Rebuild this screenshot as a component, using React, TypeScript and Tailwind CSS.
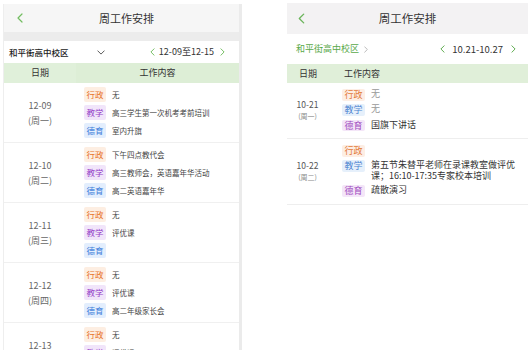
import React from "react"

type Item = { tag: "行政" | "教学" | "德育"; text: string; muted?: boolean }
type Day = { date: string; week: string; items: Item[] }

const leftDays: Day[] = [
  {
    date: "12-09",
    week: "(周一)",
    items: [
      { tag: "行政", text: "无" },
      { tag: "教学", text: "高三学生第一次机考考前培训" },
      { tag: "德育", text: "室内升旗" },
    ],
  },
  {
    date: "12-10",
    week: "(周二)",
    items: [
      { tag: "行政", text: "下午四点教代会" },
      { tag: "教学", text: "高三教师会，英语嘉年华活动" },
      { tag: "德育", text: "高二英语嘉年华" },
    ],
  },
  {
    date: "12-11",
    week: "(周三)",
    items: [
      { tag: "行政", text: "无" },
      { tag: "教学", text: "评优课" },
      { tag: "德育", text: "" },
    ],
  },
  {
    date: "12-12",
    week: "(周四)",
    items: [
      { tag: "行政", text: "无" },
      { tag: "教学", text: "评优课" },
      { tag: "德育", text: "高二年级家长会" },
    ],
  },
  {
    date: "12-13",
    week: "(周五)",
    items: [
      { tag: "行政", text: "无" },
      { tag: "教学", text: "评优课" },
      { tag: "德育", text: "" },
    ],
  },
]

const rightDays: Day[] = [
  {
    date: "10-21",
    week: "(周一)",
    items: [
      { tag: "行政", text: "无", muted: true },
      { tag: "教学", text: "无", muted: true },
      { tag: "德育", text: "国旗下讲话" },
    ],
  },
  {
    date: "10-22",
    week: "(周二)",
    items: [
      { tag: "行政", text: "" },
      { tag: "教学", text: "第五节朱替平老师在录课教室做评优课；16:10-17:35专家校本培训" },
      { tag: "德育", text: "疏散演习" },
    ],
  },
]

const leftTag: Record<string, string> = {
  行政: "bg-[#fdeee2] text-[#e8742a]",
  教学: "bg-[#f1e5fa] text-[#9440c8]",
  德育: "bg-[#e3eefd] text-[#3d7edb]",
}

const rightTag: Record<string, string> = {
  行政: "bg-[#fdeee4] text-[#e27a3b]",
  教学: "bg-[#e6f0fb] text-[#4a82d0]",
  德育: "bg-[#f4e6f8] text-[#a04dc0]",
}

function Chevron({ dir, className }: { dir: "left" | "right" | "down"; className?: string }) {
  const pts =
    dir === "left" ? "5,1 1,5 5,9" : dir === "right" ? "1,1 5,5 1,9" : "1,1 5,5 9,1"
  const vb = dir === "down" ? "0 0 10 6" : "0 0 6 10"
  return (
    <svg viewBox={vb} className={className} fill="none" stroke="currentColor" strokeWidth={1.2}>
      <polyline points={pts} strokeLinecap="round" strokeLinejoin="round" />
    </svg>
  )
}

function LeftPanel() {
  return (
    <div className="mt-[4px] ml-[3px] w-[239px] shrink-0 border-l border-[#eeeeee] border-r-[3px] border-r-[#ebebeb] bg-white">
      <div className="h-[28px] bg-[#f6f6f6] flex items-center">
        <div className="w-[30px] pl-[13px]">
          <Chevron dir="left" className="w-[6px] h-[10px] text-[#72bd60]" />
        </div>
        <div className="flex-1 text-center text-[11px] text-[#333]">周工作安排</div>
        <div className="w-[20px]" />
      </div>
      <div className="h-[9px] bg-[#ececec]" />
      <div className="h-[22px] flex items-center pl-[5px] text-[#222]">
        <span className="text-[8.5px] font-medium">和平街高中校区</span>
        <Chevron dir="down" className="ml-[28px] w-[8px] h-[5px] text-[#555]" />
        <div className="ml-auto mr-[14px] flex items-center">
          <Chevron dir="left" className="w-[5px] h-[8px] text-[#72bd60]" />
          <span className="ml-[4px] mr-[6px] text-[9px] text-[#333]">12-09至12-15</span>
          <Chevron dir="right" className="w-[5px] h-[8px] text-[#72bd60]" />
        </div>
      </div>
      <div className="h-[20px] flex text-[9px] text-[#333] bg-[#ddeed6]">
        <div className="w-[72px] flex items-center justify-center bg-[#e0f0da]">日期</div>
        <div className="flex-1 flex items-center justify-center">工作内容</div>
      </div>
      {leftDays.map((d) => (
        <div key={d.date} className="flex border-b-[1.5px] border-[#f0f0f0] py-[4px]">
          <div className="w-[72px] flex flex-col items-center justify-center text-[9px] leading-[15px] text-[#666]">
            <span>{d.date}</span>
            <span>{d.week}</span>
          </div>
          <div className="flex-1 pl-[8px] flex flex-col gap-[3px]">
            {d.items.map((it) => (
              <div key={it.tag} className="flex items-center h-[15px]">
                <span
                  className={`h-[15px] w-[22px] rounded-[2px] flex items-center justify-center text-[8.5px] ${leftTag[it.tag]}`}
                >
                  {it.tag}
                </span>
                <span className="ml-[6px] text-[7.5px] text-[#444]">{it.text}</span>
              </div>
            ))}
          </div>
        </div>
      ))}
    </div>
  )
}

function RightPanel() {
  return (
    <div className="mt-[3px] ml-[45px] flex-1 bg-white">
      <div className="h-[31px] bg-[#f3f2f3] flex items-center">
        <div className="w-[18px] pl-[11px]">
          <Chevron dir="left" className="w-[7px] h-[11px] text-[#6ab45a]" />
        </div>
        <div className="flex-1 text-center text-[11.5px] text-[#333] pr-[18px]">周工作安排</div>
      </div>
      <div className="h-[30px] flex items-center pl-[9px]">
        <span className="text-[9px] text-[#5aa94a]">和平街高中校区</span>
        <Chevron dir="right" className="ml-[5px] w-[4px] h-[7px] text-[#aaa]" />
        <div className="ml-auto mr-[12px] flex items-center">
          <Chevron dir="left" className="w-[5px] h-[8px] text-[#5aa94a]" />
          <span className="ml-[7px] mr-[8px] text-[9.5px] text-[#333]">10.21-10.27</span>
          <Chevron dir="right" className="w-[5px] h-[8px] text-[#5aa94a]" />
        </div>
      </div>
      <div className="h-[19px] flex items-center bg-[#e0efd9] text-[9px] text-[#333]">
        <span className="ml-[12px]">日期</span>
        <span className="ml-[27px]">工作内容</span>
      </div>
      {rightDays.map((d) => (
        <div key={d.date} className="flex border-b border-[#eeeeee] pt-[6px] pb-[7px]">
          <div className="w-[41px] flex flex-col items-center justify-center">
            <span className="text-[8.5px] leading-[12px] text-[#555]">{d.date}</span>
            <span className="text-[7px] leading-[12px] text-[#888]">{d.week}</span>
          </div>
          <div className="flex-1 pl-[14px] pr-[6px] flex flex-col gap-[3.8px]">
            {d.items.map((it) => (
              <div key={it.tag} className="flex items-start">
                <span
                  className={`shrink-0 h-[11.5px] w-[23px] rounded-[2px] flex items-center justify-center text-[9px] ${rightTag[it.tag]}`}
                >
                  {it.tag}
                </span>
                <span
                  className={`ml-[6px] -mt-[1px] text-[9px] leading-[11px] ${it.muted ? "text-[#999]" : "text-[#333]"}`}
                >
                  {it.text}
                </span>
              </div>
            ))}
          </div>
        </div>
      ))}
    </div>
  )
}

export default function App() {
  return (
    <div
      className="w-[528px] h-[350px] overflow-hidden flex bg-white"
      style={{ fontFamily: '"Noto Sans CJK SC", "Noto Sans", sans-serif' }}
    >
      <LeftPanel />
      <RightPanel />
    </div>
  )
}
